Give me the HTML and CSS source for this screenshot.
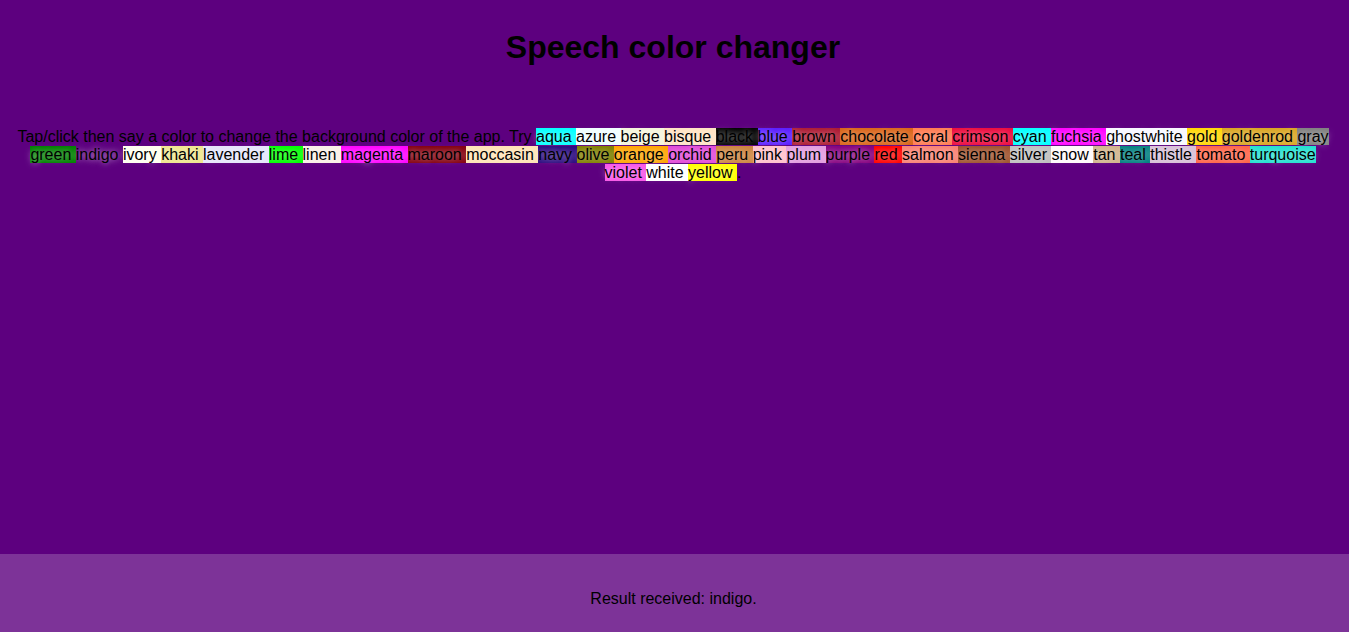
FILE: index.html
```html
<!DOCTYPE html>
<html lang="en">
<head>
<meta charset="utf-8">
<title>Speech color changer</title>
<link rel="stylesheet" href="styles.css">
</head>
<body>
<main class="main">
<h1 class="title">Speech color changer</h1>
<p class="hints">Tap/click then say a color to change the background color of the app. Try <span class="c-aqua">aqua </span><span class="c-azure">azure </span><span class="c-beige">beige </span><span class="c-bisque">bisque </span><span class="c-black">black </span><span class="c-blue">blue </span><span class="c-brown">brown </span><span class="c-chocolate">chocolate </span><span class="c-coral">coral </span><span class="c-crimson">crimson </span><span class="c-cyan">cyan </span><span class="c-fuchsia">fuchsia </span><span class="c-ghostwhite">ghostwhite </span><span class="c-gold">gold </span><span class="c-goldenrod">goldenrod </span><span class="c-gray">gray </span><span class="c-green">green </span><span class="c-indigo">indigo </span><span class="c-ivory">ivory </span><span class="c-khaki">khaki </span><span class="c-lavender">lavender </span><span class="c-lime">lime </span><span class="c-linen">linen </span><span class="c-magenta">magenta </span><span class="c-maroon">maroon </span><span class="c-moccasin">moccasin </span><span class="c-navy">navy </span><span class="c-olive">olive </span><span class="c-orange">orange </span><span class="c-orchid">orchid </span><span class="c-peru">peru </span><span class="c-pink">pink </span><span class="c-plum">plum </span><span class="c-purple">purple </span><span class="c-red">red </span><span class="c-salmon">salmon </span><span class="c-sienna">sienna </span><span class="c-silver">silver </span><span class="c-snow">snow </span><span class="c-tan">tan </span><span class="c-teal">teal </span><span class="c-thistle">thistle </span><span class="c-tomato">tomato </span><span class="c-turquoise">turquoise </span><span class="c-violet">violet </span><span class="c-white">white </span><span class="c-yellow">yellow </span>.</p>
</main>
<footer class="footer">
<p class="output">Result received: indigo.</p>
</footer>
</body>
</html>
```

FILE: styles.css
```css
html, body {
  margin: 0;
  padding: 0;
}

body {
  min-height: 100vh;
  display: flex;
  flex-direction: column;
  background-color: #5d007f;
  color: #000;
  font-family: "Liberation Sans", Arial, sans-serif;
  overflow: hidden;
}

.main {
  flex: 1;
}

.title {
  margin: 29px 0 0;
  padding-right: 3px;
  font-size: 32px;
  line-height: 37px;
  font-weight: bold;
  text-align: center;
}

.hints {
  margin: 62px 0 0;
  padding: 0 16px 0 13px;
  font-size: 16px;
  line-height: 18px;
  text-align: center;
}

.hints span {
  text-shadow: 0 0 6px rgba(255, 255, 255, 0.7);
}

.footer {
  height: 78px;
  box-sizing: border-box;
  padding: 36px 2px 0 0;
  background-color: rgba(255, 255, 255, 0.2);
}

.output {
  margin: 0;
  font-size: 16px;
  line-height: 18px;
  text-align: center;
}

.c-aqua { background-color: #00ffff; }
.c-azure { background-color: #f0ffff; }
.c-beige { background-color: #f5f5dc; }
.c-bisque { background-color: #ffe4c4; }
.c-black { background-color: #000000; }
.c-blue { background-color: #5a1cff; }
.c-brown { background-color: #ad1a33; }
.c-chocolate { background-color: #da6418; }
.c-coral { background-color: #ff7a50; }
.c-crimson { background-color: #ec0a3e; }
.c-cyan { background-color: #00ffff; }
.c-fuchsia { background-color: #ff00ff; }
.c-ghostwhite { background-color: #f8f8ff; }
.c-gold { background-color: #ffd700; }
.c-goldenrod { background-color: #daa520; }
.c-gray { background-color: #808080; }
.c-green { background-color: #008000; }
.c-indigo { background-color: #5d007f; }
.c-ivory { background-color: #fffff0; }
.c-khaki { background-color: #f0e68c; }
.c-lavender { background-color: #e6e6fa; }
.c-lime { background-color: #00ff00; }
.c-linen { background-color: #faf0e6; }
.c-magenta { background-color: #ff00ff; }
.c-maroon { background-color: #850010; }
.c-moccasin { background-color: #ffe4b5; }
.c-navy { background-color: #2c0b80; }
.c-olive { background-color: #808000; }
.c-orange { background-color: #ffa500; }
.c-orchid { background-color: #e248d8; }
.c-peru { background-color: #cd853f; }
.c-pink { background-color: #ffc0cb; }
.c-plum { background-color: #e39ce0; }
.c-purple { background-color: #86007f; }
.c-red { background-color: #ff0000; }
.c-salmon { background-color: #fa8072; }
.c-sienna { background-color: #a0522d; }
.c-silver { background-color: #c0c0c0; }
.c-snow { background-color: #fffafa; }
.c-tan { background-color: #d2b48c; }
.c-teal { background-color: #008080; }
.c-thistle { background-color: #d8bfd8; }
.c-tomato { background-color: #ff6347; }
.c-turquoise { background-color: #20e0d0; }
.c-violet { background-color: #f855e8; }
.c-white { background-color: #ffffff; }
.c-yellow { background-color: #ffff00; }
```
